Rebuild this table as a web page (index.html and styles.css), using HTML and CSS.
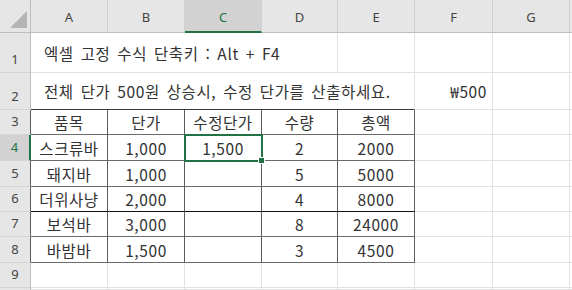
FILE: index.html
```html
<!DOCTYPE html>
<html lang="ko">
<head>
<meta charset="utf-8">
<link rel="stylesheet" href="styles.css">
</head>
<body>
<div class="sheet">
  <!-- header row -->
  <div class="corner"><span class="tri"></span></div>
  <div class="ch">A</div><div class="ch">B</div><div class="ch sel">C</div><div class="ch">D</div><div class="ch">E</div><div class="ch">F</div><div class="ch">G</div><div class="ch end"></div>
  <!-- row 1 -->
  <div class="rh">1</div>
  <div class="c lt span4">엑셀 고정 수식 단축키 : Alt + F4</div>
  <div class="c"></div><div class="c"></div><div class="c"></div><div class="c end"></div>
  <!-- row 2 -->
  <div class="rh">2</div>
  <div class="c lt span5 tt">전체 단가 500원 상승시, 수정 단가를 산출하세요.</div>
  <div class="c rt">₩500</div><div class="c"></div><div class="c end"></div>
  <!-- row 3 -->
  <div class="rh tl">3</div>
  <div class="c tb">품목</div><div class="c tb">단가</div><div class="c tb">수정단가</div><div class="c tb">수량</div><div class="c tb">총액</div>
  <div class="c"></div><div class="c"></div><div class="c end"></div>
  <!-- row 4 -->
  <div class="rh tl sel">4</div>
  <div class="c tb">스크류바</div><div class="c tb">1,000</div><div class="c tb active">1,500</div><div class="c tb">2</div><div class="c tb">2000</div>
  <div class="c"></div><div class="c"></div><div class="c end"></div>
  <!-- row 5 -->
  <div class="rh tl">5</div>
  <div class="c tb">돼지바</div><div class="c tb">1,000</div><div class="c tb"></div><div class="c tb">5</div><div class="c tb">5000</div>
  <div class="c"></div><div class="c"></div><div class="c end"></div>
  <!-- row 6 -->
  <div class="rh tl">6</div>
  <div class="c tb dk">더위사냥</div><div class="c tb dk">2,000</div><div class="c tb dk"></div><div class="c tb dk">4</div><div class="c tb dk">8000</div>
  <div class="c"></div><div class="c"></div><div class="c end"></div>
  <!-- row 7 -->
  <div class="rh tl">7</div>
  <div class="c tb">보석바</div><div class="c tb">3,000</div><div class="c tb"></div><div class="c tb">8</div><div class="c tb">24000</div>
  <div class="c"></div><div class="c"></div><div class="c end"></div>
  <!-- row 8 -->
  <div class="rh tl">8</div>
  <div class="c tb">바밤바</div><div class="c tb">1,500</div><div class="c tb"></div><div class="c tb">3</div><div class="c tb">4500</div>
  <div class="c"></div><div class="c"></div><div class="c end"></div>
  <!-- row 9 -->
  <div class="rh">9</div>
  <div class="c"></div><div class="c"></div><div class="c"></div><div class="c"></div><div class="c"></div><div class="c"></div><div class="c"></div><div class="c end"></div>
  <!-- row 10 (partial) -->
  <div class="rh"></div>
  <div class="c"></div><div class="c"></div><div class="c"></div><div class="c"></div><div class="c"></div><div class="c"></div><div class="c"></div><div class="c end"></div>
</div>
</body>
</html>
```
FILE: styles.css
```css
html, body {
  margin: 0;
  padding: 0;
  background: #ffffff;
  overflow: hidden;
}

.sheet {
  display: grid;
  grid-template-columns: 31px 77px 77px 77px 76px 77px 78px 77px 2px;
  grid-template-rows: 33px 40px 37px 25px 26px 26px 25px 25px 26px 25px 2px;
  width: 572px;
  height: 290px;
  overflow: hidden;
  font-family: "Noto Sans CJK KR", "Noto Sans", sans-serif;
  font-size: 15.5px;
  letter-spacing: 0.6px;
  color: #333333;
}

.sheet > div {
  box-sizing: border-box;
  min-width: 0;
  display: flex;
  align-items: center;
  justify-content: center;
  white-space: nowrap;
}

.corner {
  position: relative;
  background: #e6e6e6;
  border-right: 1px solid #bdbdbd;
  border-bottom: 1px solid #bdbdbd;
}

.tri {
  position: absolute;
  right: 3px;
  bottom: 4px;
  width: 0;
  height: 0;
  border-left: 17px solid transparent;
  border-bottom: 17px solid #b4b4b4;
}

.ch {
  background: #e6e6e6;
  border-right: 1px solid #cfcfcf;
  border-bottom: 1px solid #bdbdbd;
  font-family: "Noto Sans", "Open Sans", sans-serif;
  font-size: 13px;
  letter-spacing: 0;
  color: #444444;
  align-items: flex-end !important;
  padding-bottom: 6px;
}

.ch.sel {
  background: #d2d2d2;
  color: #217346;
  border-bottom: 2px solid #217346;
  padding-bottom: 5px;
}

.ch.end { border-right: none; }

.rh {
  background: #e6e6e6;
  border-right: 1px solid #bdbdbd;
  border-bottom: 1px solid #d4d4d4;
  font-family: "Noto Sans", "Open Sans", sans-serif;
  font-size: 13px;
  letter-spacing: 0;
  color: #444444;
  align-items: flex-end !important;
  padding-bottom: 4px;
}

.rh.tl { border-right-color: #5e5e5e; }

.rh.sel {
  background: #d2d2d2;
  color: #217346;
  border-right: 2px solid #217346;
}

.c {
  border-right: 1px solid #e1e1e1;
  border-bottom: 1px solid #e1e1e1;
}

.c.end { border-right: none; }

.span4 { grid-column: span 4; }
.span5 { grid-column: span 5; }

.lt {
  justify-content: flex-start !important;
  padding-left: 13px;
  word-spacing: 2px;
}

.rt {
  justify-content: flex-end !important;
  padding-right: 5px;
}

.tt { border-bottom-color: #3a3a3a; }

.tb {
  border-right-color: #5e5e5e;
  border-bottom-color: #6a6a6a;
}

.tb.dk { border-bottom-color: #111111; }

.active { position: relative; }

.active::before {
  content: "";
  position: absolute;
  left: -1px;
  top: -1px;
  width: 79px;
  height: 28px;
  box-sizing: border-box;
  border: 2px solid #217346;
}

.active::after {
  content: "";
  position: absolute;
  left: 73px;
  top: 22px;
  width: 5px;
  height: 5px;
  background: #217346;
  border: 1px solid #ffffff;
}
```
